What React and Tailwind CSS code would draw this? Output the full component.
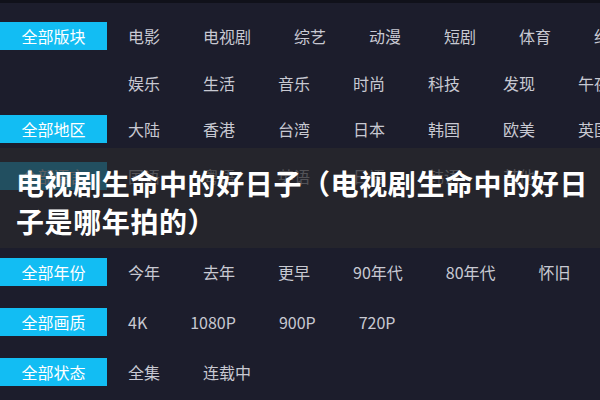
import React from "react";

const rows = [
  { mt: "mt-[19px]", label: "全部版块", items: ["电影", "电视剧", "综艺", "动漫", "短剧", "体育", "纪录片"] },
  { mt: "mt-[19px]", label: null, items: ["娱乐", "生活", "音乐", "时尚", "科技", "发现", "午夜"] },
  { mt: "mt-[18px]", label: "全部地区", items: ["大陆", "香港", "台湾", "日本", "韩国", "欧美", "英国"] },
  { mt: "mt-[19px]", label: "全部语言", items: ["国语", "粤语", "英语", "日语", "韩语", "其他"] },
  { mt: "mt-[20px]", label: null, items: [] },
  { mt: "mt-[20px]", label: "全部年份", items: ["今年", "去年", "更早", "90年代", "80年代", "怀旧"] },
  { mt: "mt-[22px]", label: "全部画质", items: ["4K", "1080P", "900P", "720P"] },
  { mt: "mt-[22px]", label: "全部状态", items: ["全集", "连载中"] },
];

export default function App() {
  return (
    <div
      className="relative w-[600px] h-[400px] overflow-hidden bg-[#1c1d2c]"
      style={{ fontFamily: '"Noto Sans CJK SC", "Noto Sans", sans-serif' }}
    >
      <div className="h-[3px] bg-[#10111a]" />
      <div className="flex flex-col">
        {rows.map((r, i) => (
          <div key={i} className={`${r.mt} flex h-[28px] items-center whitespace-nowrap`}>
            <div className="w-[107px] h-[28px] shrink-0 flex items-center justify-center">
              {r.label && (
                <div className="w-full h-full bg-[#12bdf3] text-white text-[16px] flex items-center justify-center leading-none">
                  {r.label}
                </div>
              )}
            </div>
            <div className="ml-[21px] flex gap-[43px] text-[16px] leading-none text-[#c8c9d2]">
              {r.items.map((t) => (
                <span key={t}>{t}</span>
              ))}
            </div>
          </div>
        ))}
      </div>
      <div className="absolute left-0 right-0 top-[148px] h-[100px] bg-[rgba(40,41,44,0.74)] pl-[16px] pr-[6px] pt-[16px]">
        <div className="text-white font-bold text-[28px] leading-[38px] tracking-[0.6px]">
          电视剧生命中的好日子（电视剧生命中的好日子是哪年拍的）
        </div>
      </div>
    </div>
  );
}
